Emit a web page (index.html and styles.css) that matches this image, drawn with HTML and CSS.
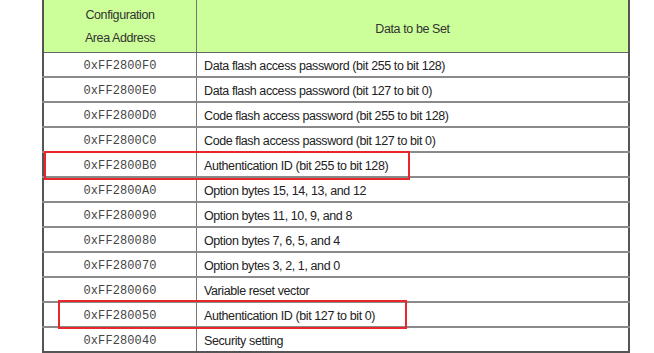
FILE: index.html
```html
<!DOCTYPE html>
<html>
<head>
<meta charset="utf-8">
<link rel="stylesheet" href="styles.css">
</head>
<body>
<div class="wrap">
  <table class="cfg">
    <thead>
      <tr>
        <th class="c1">Configuration<br>Area Address</th>
        <th class="c2">Data to be Set</th>
      </tr>
    </thead>
    <tbody>
      <tr><td class="addr">0xFF2800F0</td><td>Data flash access password (bit 255 to bit 128)</td></tr>
      <tr><td class="addr">0xFF2800E0</td><td>Data flash access password (bit 127 to bit 0)</td></tr>
      <tr><td class="addr">0xFF2800D0</td><td>Code flash access password (bit 255 to bit 128)</td></tr>
      <tr><td class="addr">0xFF2800C0</td><td>Code flash access password (bit 127 to bit 0)</td></tr>
      <tr><td class="addr">0xFF2800B0</td><td>Authentication ID (bit 255 to bit 128)</td></tr>
      <tr><td class="addr">0xFF2800A0</td><td>Option bytes 15, 14, 13, and 12</td></tr>
      <tr><td class="addr">0xFF280090</td><td>Option bytes 11, 10, 9, and 8</td></tr>
      <tr><td class="addr">0xFF280080</td><td>Option bytes 7, 6, 5, and 4</td></tr>
      <tr><td class="addr">0xFF280070</td><td>Option bytes 3, 2, 1, and 0</td></tr>
      <tr><td class="addr">0xFF280060</td><td>Variable reset vector</td></tr>
      <tr><td class="addr">0xFF280050</td><td>Authentication ID (bit 127 to bit 0)</td></tr>
      <tr><td class="addr">0xFF280040</td><td>Security setting</td></tr>
    </tbody>
  </table>
  <div class="mark mark-a"></div>
  <div class="mark mark-b"></div>
</div>
</body>
</html>
```

FILE: styles.css
```css
html, body {
  margin: 0;
  padding: 0;
  background: #ffffff;
}
.wrap {
  position: relative;
  width: 654px;
  height: 353px;
  overflow: hidden;
}
.cfg {
  margin-left: 42px;
  width: 588px;
  border-collapse: collapse;
  table-layout: fixed;
  font-family: "Liberation Sans", Arial, sans-serif;
  font-size: 12.5px;
  letter-spacing: -0.4px;
  color: #222;
}
.cfg th {
  background: #ccff99;
  font-weight: normal;
  color: #333;
  height: 49px;
  padding: 0;
  border-left: 2px solid #555;
  border-right: 2px solid #555;
  border-bottom: 1px solid #666;
  vertical-align: middle;
}
.cfg th.c1 {
  width: 152px;
  line-height: 23px;
  padding-top: 1px;
  border-right: 1px solid #777;
}
.cfg th.c2 {
  height: 47px;
  padding-top: 5px;
  border-left: 1px solid #777;
}
.cfg td {
  height: 19px;
  padding: 4px 0 0 7px;
  border-bottom: 2px solid #8a8a8a;
  border-right: 2px solid #555;
  line-height: 19px;
  white-space: nowrap;
  vertical-align: middle;
}
.cfg td.addr {
  font-family: "Liberation Mono", "Courier New", monospace;
  font-size: 12px;
  letter-spacing: 0.1px;
  color: #444;
  text-align: center;
  padding: 4px 0 0 0;
  border-left: 2px solid #555;
  border-right: 1px solid #777;
}
.cfg tbody tr:last-child td {
  border-bottom: 2px solid #555;
}
.mark {
  position: absolute;
  border: 2px solid #e8262b;
  box-sizing: border-box;
}
.mark-a {
  left: 44px;
  top: 151px;
  width: 366px;
  height: 29px;
}
.mark-b {
  left: 58px;
  top: 300px;
  width: 349px;
  height: 29px;
}
```
